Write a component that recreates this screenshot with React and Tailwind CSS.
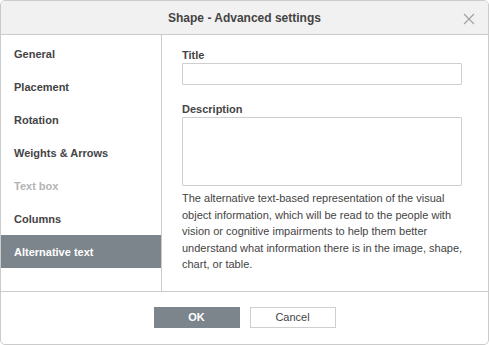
import React from "react";

const items = [
  { label: "General" },
  { label: "Placement" },
  { label: "Rotation" },
  { label: "Weights & Arrows" },
  { label: "Text box", disabled: true },
  { label: "Columns" },
  { label: "Alternative text", active: true },
];

export default function App() {
  return (
    <div className="w-[489px] h-[345px] bg-white" style={{ fontFamily: '"Liberation Sans", Arial, sans-serif' }}>
      <div className="w-[489px] h-[345px] border border-[#cbcbcb] rounded-[5px] overflow-hidden flex flex-col text-[#444]">
        {/* HEADER */}
        <div className="h-[34px] shrink-0 bg-[#f1f1f1] border-b border-[#cbcbcb] relative flex items-center justify-center">
          <span className="text-[12px] font-bold text-[#444]">Shape - Advanced settings</span>
          <svg className="absolute right-[13px] top-[12px]" width="12" height="12" viewBox="0 0 12 12">
            <path d="M1 1 L11 11 M11 1 L1 11" stroke="#a0a0a0" strokeWidth="1.1" fill="none" />
          </svg>
        </div>

        {/* BODY */}
        <div className="flex h-[257px] shrink-0 border-b border-[#cbcbcb]">
          <div className="w-[161px] shrink-0 border-r border-[#cbcbcb] pt-[2px]">
            {items.map((it) => (
              <div
                key={it.label}
                className={
                  "h-[33px] flex items-center pl-[13px] pt-[2px] text-[11px] font-bold " +
                  (it.active ? "bg-[#7d858c] text-white" : it.disabled ? "text-[#b4b4b4]" : "text-[#444]")
                }
              >
                {it.label}
              </div>
            ))}
          </div>

          <div className="flex-1 pl-[20px] pt-[13px]">
            <div className="text-[11px] font-bold leading-[14px]">Title</div>
            <div className="mt-[1px] w-[280px] h-[22px] border border-[#cfcfcf] rounded-[1px]"></div>
            <div className="mt-[17px] text-[11px] font-bold leading-[14px]">Description</div>
            <div className="mt-[1px] w-[280px] h-[69px] border border-[#cfcfcf] rounded-[1px]"></div>
            <p className="mt-[4px] w-[288px] text-[11px] leading-[16.5px] text-[#444]">
              The alternative text-based representation of the visual object information, which will be read to the people with vision or cognitive impairments to help them better understand what information there is in the image, shape, chart, or table.
            </p>
          </div>
        </div>

        {/* FOOTER */}
        <div className="flex-1 flex items-center justify-center gap-[10px] pb-[1px]">
          <button className="w-[86px] h-[21px] bg-[#7d858c] text-white text-[11px] font-bold">OK</button>
          <button className="w-[86px] h-[21px] border border-[#cfcfcf] bg-white text-[#444] text-[11px]">Cancel</button>
        </div>
      </div>
    </div>
  );
}
